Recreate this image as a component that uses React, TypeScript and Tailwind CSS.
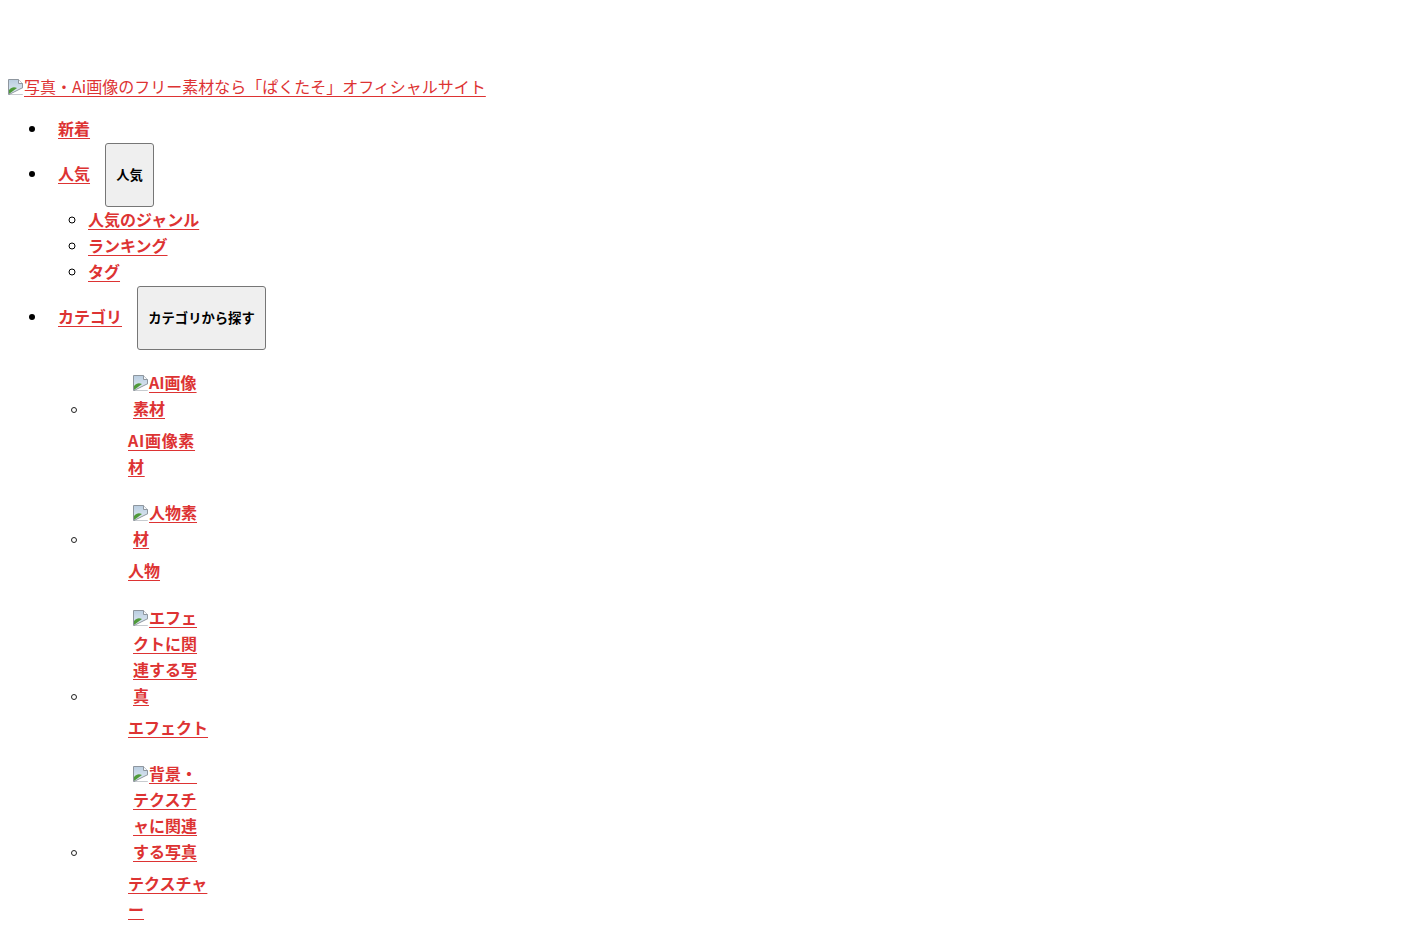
import React from "react";

const FONT = { fontFamily: '"Noto Sans CJK JP", "Noto Sans", sans-serif' };

function BrokenImg() {
  return (
    <svg width="16" height="16" viewBox="0 0 16 16" className="inline align-[-2px]">
      <defs>
        <linearGradient id="sky" x1="0" y1="0" x2="0" y2="1">
          <stop offset="0" stopColor="#b9cde0" />
          <stop offset="1" stopColor="#e4edf5" />
        </linearGradient>
      </defs>
      <path d="M0.5 0.5h10l4 4v11h-14z" fill="url(#sky)" stroke="#8e969e" strokeWidth="1" />
      <path d="M10.5 0.5v4h4" fill="#f6f8fa" stroke="#8e969e" strokeWidth="1" />
      <path d="M1 11c2.5-3 5-3.5 8-2L1 15z" fill="#4f9a3a" />
      <path d="M1 15.5L15 8.5v7z" fill="#ffffff" />
      <path d="M1 15.5L15 8.5" stroke="#8e969e" strokeWidth="1" fill="none" />
    </svg>
  );
}

const linkCls = "text-[#dd3333] underline underline-offset-[3px] decoration-[#dd3333]";

function Btn({ children }: { children: React.ReactNode }) {
  return (
    <button className="ml-[1px] mt-[2px] -mb-[2px] h-[64px] px-[10.5px] bg-[#efefef] border border-[#767676] rounded-[3px] text-[13.333px] leading-[18px] text-black font-bold align-baseline">
      {children}
    </button>
  );
}

const cats = [
  { alt: "AI画像素材", label: "AI画像素材", track: "tracking-[0.7px]" },
  { alt: "人物素材", label: "人物", track: "" },
  { alt: "エフェクトに関連する写真", label: "エフェクト", track: "" },
  { alt: "背景・テクスチャに関連する写真", label: "テクスチャー", track: "" },
];

export default function App() {
  return (
    <div className="min-h-screen bg-white text-black px-2 pt-[73px]" style={FONT}>
      <div className="leading-[26px] text-[16px]">
        <a href="#" className="text-[#dd3333]">
          <BrokenImg />
          <span className="underline underline-offset-[3px] decoration-[#dd3333]">
            写真・Ai画像のフリー素材なら「ぱくたそ」オフィシャルサイト
          </span>
        </a>
      </div>
      <ul className="mt-4 pl-10 list-disc text-[16px] leading-[26px] font-bold">
        <li>
          <a href="#" className={"px-[10px] " + linkCls}>新着</a>
        </li>
        <li>
          <a href="#" className={"px-[10px] " + linkCls}>人気</a>{" "}
          <Btn>人気</Btn>
          <ul className="pl-10 list-[circle] mt-[1px]">
            <li>
              <a href="#" className={linkCls}>人気のジャンル</a>
            </li>
            <li>
              <a href="#" className={linkCls}>ランキング</a>
            </li>
            <li>
              <a href="#" className={linkCls}>タグ</a>
            </li>
          </ul>
        </li>
        <li>
          <a href="#" className={"px-[10px] " + linkCls}>カテゴリ</a>{" "}
          <Btn>カテゴリから探す</Btn>
          <ul className="pl-10 list-none mt-[3.5px]">
            {cats.map((c) => (
              <li key={c.label} className="mt-[20.5px]">
                <a href="#" className="flex flex-col text-[#dd3333]">
                  <div className="flex items-end">
                    <span className="-ml-[17px] mb-[8px] w-[6px] h-[6px] rounded-full border border-[#222] shrink-0" />
                    <span className="ml-[56px] w-[65px] block">
                      <BrokenImg />
                      <span className="underline underline-offset-[3px] decoration-[#dd3333]">{c.alt}</span>
                    </span>
                  </div>
                  <span className={"ml-10 mt-[6px] w-20 block underline underline-offset-[3px] decoration-[#dd3333] " + c.track}>
                    {c.label}
                  </span>
                </a>
              </li>
            ))}
          </ul>
        </li>
      </ul>
    </div>
  );
}
